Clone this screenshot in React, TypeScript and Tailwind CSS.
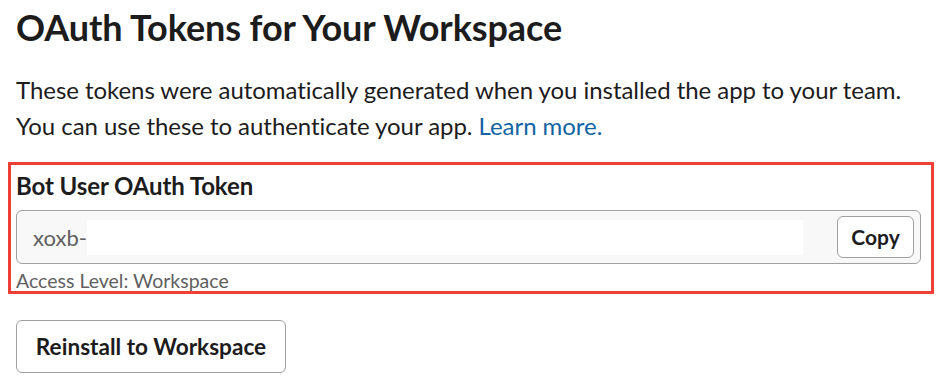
export default function App() {
  return (
    <div className="w-[948px] h-[376px] bg-white overflow-hidden font-['Lato','Noto_Sans',sans-serif] text-[#1d1c1d]">
      <div className="pl-4 pr-[15px] pt-[5px]">
        <h1 className="text-[36px] font-bold leading-[44px] tracking-[-0.1px]">
          OAuth Tokens for Your Workspace
        </h1>
        <p className="mt-[23px] text-[24px] leading-[36px] tracking-[-0.05px]">
          These tokens were automatically generated when you installed the app to your team.
          <br />
          You can use these to authenticate your app.{" "}
          <a className="text-[#1264a3]" href="#">
            Learn more.
          </a>
        </p>
      </div>

      <div className="ml-2 mt-[18px] w-[926px] h-[132px] border-[3px] border-[#ef4035] pl-[5px] pt-[7px]">
        <div className="text-[24px] font-bold leading-[28px] tracking-[-0.1px]">Bot User OAuth Token</div>
        <div className="mt-[10px] flex items-center w-[905px] h-[54px] rounded-md border border-[#a0a0a2] bg-[#f8f8f8] pl-[16px] pr-[6px]">
          <span className="text-[22px] text-[#616061]">xoxb-</span>
          <div className="h-[35px] w-[716px] bg-white" />
          <div className="flex-1" />
          <button className="h-[42px] w-[77px] rounded-md border border-[#a0a0a2] bg-white text-[21px] font-bold">
            Copy
          </button>
        </div>
        <div className="mt-[6px] text-[19.5px] leading-[22px] text-[#616061]">Access Level: Workspace</div>
      </div>

      <div className="pl-4 mt-[26px]">
        <button className="h-[53px] w-[270px] rounded-md border border-[#a0a0a2] bg-white text-[22.6px] font-bold">
          Reinstall to Workspace
        </button>
      </div>
    </div>
  );
}
